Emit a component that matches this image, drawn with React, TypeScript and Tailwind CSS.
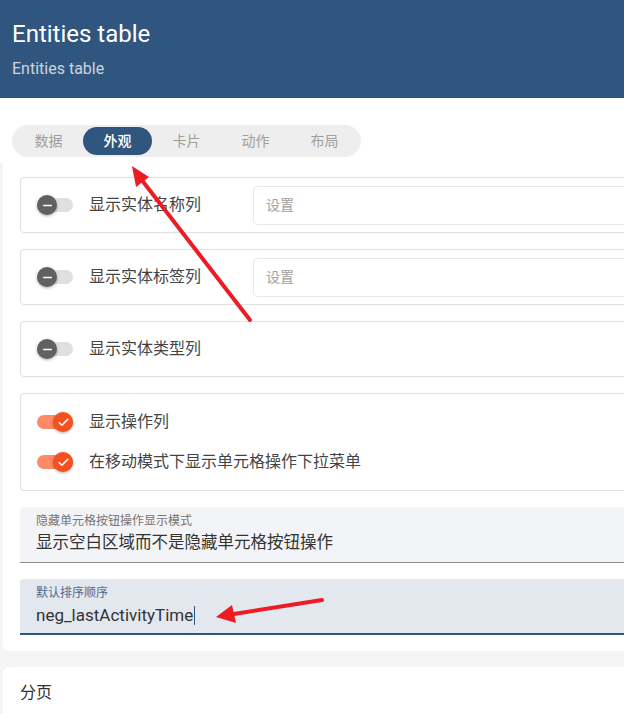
import { Check, Minus } from "lucide-react";

function Toggle({ on }: { on: boolean }) {
  return (
    <div className="relative h-5 w-9 shrink-0">
      <div
        className={`absolute left-0 top-[3px] h-[14px] w-9 rounded-full ${
          on ? "bg-[#ff8a65]" : "bg-[#e0e0e0]"
        }`}
      />
      <div
        className={`absolute top-0 flex h-5 w-5 items-center justify-center rounded-full shadow-[0_1px_3px_rgba(0,0,0,0.35)] ${
          on ? "left-4 bg-[#f4511e]" : "left-0 bg-[#616161]"
        }`}
      >
        {on ? (
          <Check size={13} strokeWidth={3} className="text-white" />
        ) : (
          <Minus size={13} strokeWidth={3} className="text-white" />
        )}
      </div>
    </div>
  );
}

function ToggleBox({ label, withInput }: { label: string; withInput?: boolean }) {
  return (
    <div className="flex h-14 items-center rounded-[4px] border border-[#e0e0e0] px-4">
      <Toggle on={false} />
      <span className="ml-4 w-[148px] shrink-0 text-base text-[#444444]">{label}</span>
      {withInput && (
        <div className="ml-4 flex h-[39px] flex-1 items-center rounded-[4px] border border-[#e8e8e8] px-3 text-sm text-[#a0a0a0]">
          设置
        </div>
      )}
    </div>
  );
}

const tabs = ["数据", "外观", "卡片", "动作", "布局"];

export default function App() {
  return (
    <div className="relative h-[714px] w-[624px] overflow-hidden bg-[#f5f5f5] font-[Roboto,'Noto_Sans_CJK_SC',sans-serif]">
      <header className="h-[98px] bg-[#305680] px-3 pt-[19px]">
        <h1 className="text-2xl leading-[30px] text-white">Entities table</h1>
        <p className="mt-[10px] text-base leading-5 text-white/75">Entities table</p>
      </header>

      <div className="bg-white pb-[6px] pl-3 pt-[27px]">
        <div className="flex h-8 w-fit items-center rounded-full bg-[#eeeeee] px-[2px]">
          {tabs.map((t) => (
            <div
              key={t}
              className={`flex h-7 w-[69px] items-center justify-center rounded-full text-sm ${
                t === "外观" ? "bg-[#305680] font-medium text-white" : "text-[#9e9e9e]"
              }`}
            >
              {t}
            </div>
          ))}
        </div>
      </div>

      <div className="pl-[3px]">
        <div className="w-[700px] rounded-b-[6px] bg-white px-[17px] pb-4 pt-[14px]">
          <div className="flex flex-col gap-4">
            <ToggleBox label="显示实体名称列" withInput />
            <ToggleBox label="显示实体标签列" withInput />
            <ToggleBox label="显示实体类型列" />

            <div className="rounded-[4px] border border-[#e0e0e0] px-4 py-[8px]">
              <div className="flex h-10 items-center">
                <Toggle on />
                <span className="ml-4 text-base text-[#444444]">显示操作列</span>
              </div>
              <div className="flex h-10 items-center">
                <Toggle on />
                <span className="ml-4 text-base text-[#444444]">在移动模式下显示单元格操作下拉菜单</span>
              </div>
            </div>

            <div className="h-14 rounded-t-[4px] border-b border-[#8a8a8a] bg-[#f3f4f7] px-4 pt-[6px]">
              <div className="text-xs leading-4 text-[#757575]">隐藏单元格按钮操作显示模式</div>
              <div className="mt-[2px] text-[16.5px] leading-6 text-[#333333]">显示空白区域而不是隐藏单元格按钮操作</div>
            </div>

            <div className="h-14 rounded-t-[4px] border-b-2 border-[#305680] bg-[#e3e8ef] px-4 pt-[6px]">
              <div className="text-xs leading-4 text-[#4a6a90]">默认排序顺序</div>
              <div className="mt-[2px] flex items-center text-[17px] leading-6 text-[#333333]">
                neg_lastActivityTime
                <span className="ml-[1px] h-[19px] w-px bg-[#305680]" />
              </div>
            </div>
          </div>
        </div>

        <div className="mt-4 w-[700px] rounded-[6px] bg-white px-[17px] pt-4 pb-6">
          <div className="text-base leading-5 text-[#333333]">分页</div>
        </div>
      </div>

      <svg className="pointer-events-none absolute left-0 top-0" width="624" height="714" viewBox="0 0 624 714">
        <line x1="250" y1="320" x2="141" y2="179" stroke="#ec1c24" strokeWidth="4" strokeLinecap="round" />
        <polygon points="132,166 149,177 136,187" fill="#ec1c24" />
        <line x1="322" y1="600" x2="234" y2="614" stroke="#ec1c24" strokeWidth="4" strokeLinecap="round" />
        <polygon points="216,617 232,605 236,623" fill="#ec1c24" />
      </svg>
    </div>
  );
}
